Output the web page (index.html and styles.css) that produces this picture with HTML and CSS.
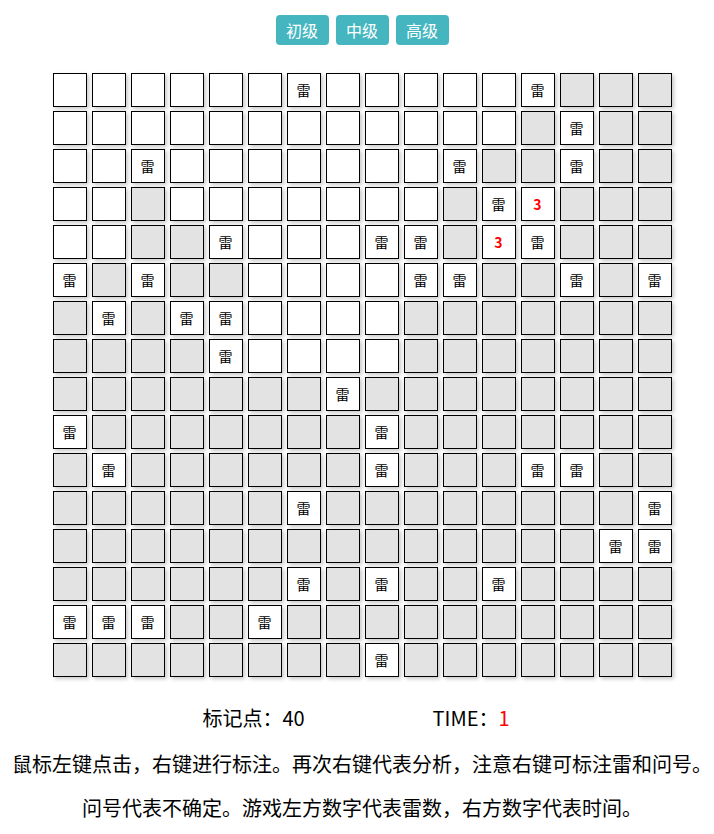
FILE: index.html
```html
<!DOCTYPE html>
<html lang="zh-CN">
<head>
<meta charset="utf-8">
<title>扫雷</title>
<link rel="stylesheet" href="styles.css">
</head>
<body>
<div class="page">
  <div class="levels">
    <button class="lvl">初级</button>
    <button class="lvl">中级</button>
    <button class="lvl">高级</button>
  </div>
  <div class="board">
    <span class="o"></span><span class="o"></span><span class="o"></span><span class="o"></span><span class="o"></span><span class="o"></span><span class="o">雷</span><span class="o"></span><span class="o"></span><span class="o"></span><span class="o"></span><span class="o"></span><span class="o">雷</span><span class="c"></span><span class="c"></span><span class="c"></span>
    <span class="o"></span><span class="o"></span><span class="o"></span><span class="o"></span><span class="o"></span><span class="o"></span><span class="o"></span><span class="o"></span><span class="o"></span><span class="o"></span><span class="o"></span><span class="o"></span><span class="c"></span><span class="o">雷</span><span class="c"></span><span class="c"></span>
    <span class="o"></span><span class="o"></span><span class="o">雷</span><span class="o"></span><span class="o"></span><span class="o"></span><span class="o"></span><span class="o"></span><span class="o"></span><span class="o"></span><span class="o">雷</span><span class="c"></span><span class="c"></span><span class="o">雷</span><span class="c"></span><span class="c"></span>
    <span class="o"></span><span class="o"></span><span class="c"></span><span class="o"></span><span class="o"></span><span class="o"></span><span class="o"></span><span class="o"></span><span class="o"></span><span class="o"></span><span class="c"></span><span class="o">雷</span><span class="o n">3</span><span class="c"></span><span class="c"></span><span class="c"></span>
    <span class="o"></span><span class="o"></span><span class="c"></span><span class="c"></span><span class="o">雷</span><span class="o"></span><span class="o"></span><span class="o"></span><span class="o">雷</span><span class="o">雷</span><span class="c"></span><span class="o n">3</span><span class="o">雷</span><span class="c"></span><span class="c"></span><span class="c"></span>
    <span class="o">雷</span><span class="c"></span><span class="o">雷</span><span class="c"></span><span class="c"></span><span class="o"></span><span class="o"></span><span class="o"></span><span class="o"></span><span class="o">雷</span><span class="o">雷</span><span class="c"></span><span class="c"></span><span class="o">雷</span><span class="c"></span><span class="o">雷</span>
    <span class="c"></span><span class="o">雷</span><span class="c"></span><span class="o">雷</span><span class="o">雷</span><span class="o"></span><span class="o"></span><span class="o"></span><span class="o"></span><span class="c"></span><span class="c"></span><span class="c"></span><span class="c"></span><span class="c"></span><span class="c"></span><span class="c"></span>
    <span class="c"></span><span class="c"></span><span class="c"></span><span class="c"></span><span class="o">雷</span><span class="o"></span><span class="o"></span><span class="o"></span><span class="o"></span><span class="c"></span><span class="c"></span><span class="c"></span><span class="c"></span><span class="c"></span><span class="c"></span><span class="c"></span>
    <span class="c"></span><span class="c"></span><span class="c"></span><span class="c"></span><span class="c"></span><span class="c"></span><span class="c"></span><span class="o">雷</span><span class="c"></span><span class="c"></span><span class="c"></span><span class="c"></span><span class="c"></span><span class="c"></span><span class="c"></span><span class="c"></span>
    <span class="o">雷</span><span class="c"></span><span class="c"></span><span class="c"></span><span class="c"></span><span class="c"></span><span class="c"></span><span class="c"></span><span class="o">雷</span><span class="c"></span><span class="c"></span><span class="c"></span><span class="c"></span><span class="c"></span><span class="c"></span><span class="c"></span>
    <span class="c"></span><span class="o">雷</span><span class="c"></span><span class="c"></span><span class="c"></span><span class="c"></span><span class="c"></span><span class="c"></span><span class="o">雷</span><span class="c"></span><span class="c"></span><span class="c"></span><span class="o">雷</span><span class="o">雷</span><span class="c"></span><span class="c"></span>
    <span class="c"></span><span class="c"></span><span class="c"></span><span class="c"></span><span class="c"></span><span class="c"></span><span class="o">雷</span><span class="c"></span><span class="c"></span><span class="c"></span><span class="c"></span><span class="c"></span><span class="c"></span><span class="c"></span><span class="c"></span><span class="o">雷</span>
    <span class="c"></span><span class="c"></span><span class="c"></span><span class="c"></span><span class="c"></span><span class="c"></span><span class="c"></span><span class="c"></span><span class="c"></span><span class="c"></span><span class="c"></span><span class="c"></span><span class="c"></span><span class="c"></span><span class="o">雷</span><span class="o">雷</span>
    <span class="c"></span><span class="c"></span><span class="c"></span><span class="c"></span><span class="c"></span><span class="c"></span><span class="o">雷</span><span class="c"></span><span class="o">雷</span><span class="c"></span><span class="c"></span><span class="o">雷</span><span class="c"></span><span class="c"></span><span class="c"></span><span class="c"></span>
    <span class="o">雷</span><span class="o">雷</span><span class="o">雷</span><span class="c"></span><span class="c"></span><span class="o">雷</span><span class="c"></span><span class="c"></span><span class="c"></span><span class="c"></span><span class="c"></span><span class="c"></span><span class="c"></span><span class="c"></span><span class="c"></span><span class="c"></span>
    <span class="c"></span><span class="c"></span><span class="c"></span><span class="c"></span><span class="c"></span><span class="c"></span><span class="c"></span><span class="c"></span><span class="o">雷</span><span class="c"></span><span class="c"></span><span class="c"></span><span class="c"></span><span class="c"></span><span class="c"></span><span class="c"></span>
  </div>
  <div class="info">
    <span class="stat">标记点：40</span>
    <span class="stat">TIME：<span class="time">1</span></span>
  </div>
  <p class="tip">鼠标左键点击，右键进行标注。再次右键代表分析，注意右键可标注雷和问号。</p>
  <p class="tip">问号代表不确定。游戏左方数字代表雷数，右方数字代表时间。</p>
</div>
</body>
</html>
```
FILE: styles.css
```css
html, body {
  margin: 0;
  padding: 0;
  background: #ffffff;
}
body {
  font-family: "Microsoft YaHei", "Noto Sans CJK SC", sans-serif;
  color: #000;
}
.page {
  padding: 15px 0 0 10px;
}
.levels {
  display: flex;
  justify-content: center;
  gap: 7px;
}
.lvl {
  width: 53px;
  height: 30px;
  border: none;
  border-radius: 4px;
  background: #45b6bf;
  color: #fff;
  font-family: inherit;
  font-size: 16px;
  padding: 0;
  line-height: 30px;
}
.board {
  display: grid;
  grid-template-columns: repeat(16, 34px);
  grid-auto-rows: 34px;
  column-gap: 5px;
  row-gap: 4px;
  width: max-content;
  margin: 28px auto 0;
}
.board span {
  box-sizing: border-box;
  border: 1px solid #000;
  box-shadow: 2px 2px 4px rgba(0, 0, 0, 0.22);
  display: flex;
  align-items: center;
  justify-content: center;
  font-size: 14px;
}
.board .c {
  background: #e3e3e3;
}
.board .o {
  background: #fff;
}
.board .n {
  color: #ff0000;
  font-weight: bold;
}
.info {
  display: flex;
  justify-content: center;
  gap: 128px;
  margin-top: 26px;
  padding-right: 12px;
  font-size: 20px;
  line-height: 30px;
}
.time {
  color: #ff0000;
}
.tip {
  margin: 17px 0 0;
  text-align: center;
  white-space: nowrap;
  font-size: 20px;
  line-height: 27px;
}
.tip + .tip {
  margin-top: 17px;
}
```
